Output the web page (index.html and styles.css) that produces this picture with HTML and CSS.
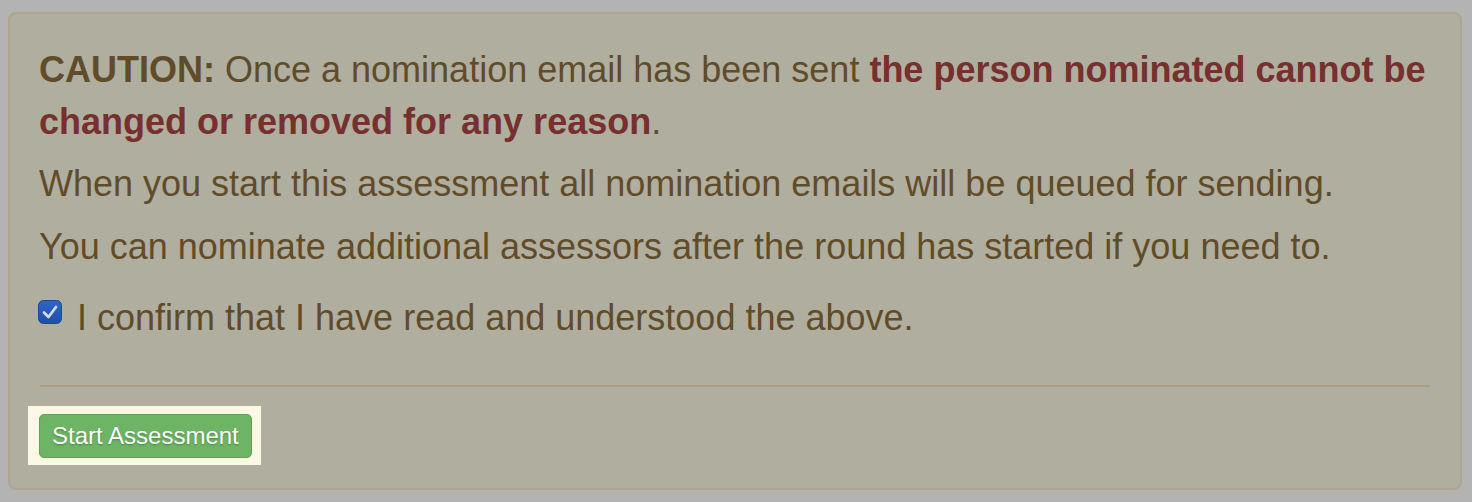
FILE: index.html
```html
<!DOCTYPE html>
<html lang="en">
<head>
    <meta charset="UTF-8">
    <meta name="viewport" content="width=device-width, initial-scale=1.0">
    <title>Start Assessment</title>
    <link rel="stylesheet" href="styles.css">
</head>
<body>

    <div class="alert-warning">
        <p><strong>CAUTION:</strong> Once a nomination email has been sent <strong class="danger">the person nominated cannot be changed or removed for any reason</strong>.</p>
        <p>When you start this assessment all nomination emails will be queued for sending.</p>
        <p>You can nominate additional assessors after the round has started if you need to.</p>

        <label class="confirm">
            <svg class="checkbox" width="24" height="24" viewBox="0 0 24 24">
                <defs>
                    <linearGradient id="boxFill" x1="0" y1="0" x2="0" y2="1">
                        <stop offset="0" stop-color="#2e66c6"/>
                        <stop offset="1" stop-color="#1f4fa6"/>
                    </linearGradient>
                </defs>
                <rect x="0.5" y="0.5" width="23" height="23" rx="5" fill="url(#boxFill)" stroke="#1d4894"/>
                <path d="M6 12.5 L10.5 17 L18 7" fill="none" stroke="#d3d8e2" stroke-width="2.8" stroke-linecap="round" stroke-linejoin="round"/>
            </svg>
            I confirm that I have read and understood the above.
        </label>

        <hr>

        <div class="highlight"><button class="btn-success">Start Assessment</button></div>
    </div>

</body>
</html>
```

FILE: styles.css
```css
body {
    margin: 0;
    padding: 12px 10px 13px 8px;
    background: #b3b3b3;
    font-family: "Liberation Sans", Arial, sans-serif;
}
.alert-warning {
    background: #b0ae9f;
    border: 2px solid #afa58f;
    border-radius: 8px;
    padding: 30px 30px 30px 29px;
    color: #614c29;
    font-size: 36px;
    line-height: 51.5px;
}
.alert-warning p {
    margin: 0 0 11px;
}
.danger {
    color: #76302e;
}
.confirm {
    display: flex;
    align-items: center;
    gap: 15px;
    margin-top: 20px;
}
.checkbox {
    flex: none;
    margin-top: -11px;
    margin-left: -1px;
}
hr {
    border: none;
    border-top: 2px solid #ad9e7f;
    margin: 41px 0 27px 1px;
}
.highlight {
    display: flex;
    width: fit-content;
    background: #fcf8e6;
    padding: 8px 9px 7px 11px;
    margin: -8px 0 -7px -11px;
}
.btn-success {
    display: block;
    font-family: "Liberation Sans", Arial, sans-serif;
    font-size: 24px;
    line-height: 26px;
    padding: 8px 12px;
    color: white;
    background: #6db565;
    border: 1px solid #5ba554;
    border-radius: 5px;
    text-shadow: 0 1px 2px rgba(0, 0, 0, 0.3);
    cursor: pointer;
}
```
